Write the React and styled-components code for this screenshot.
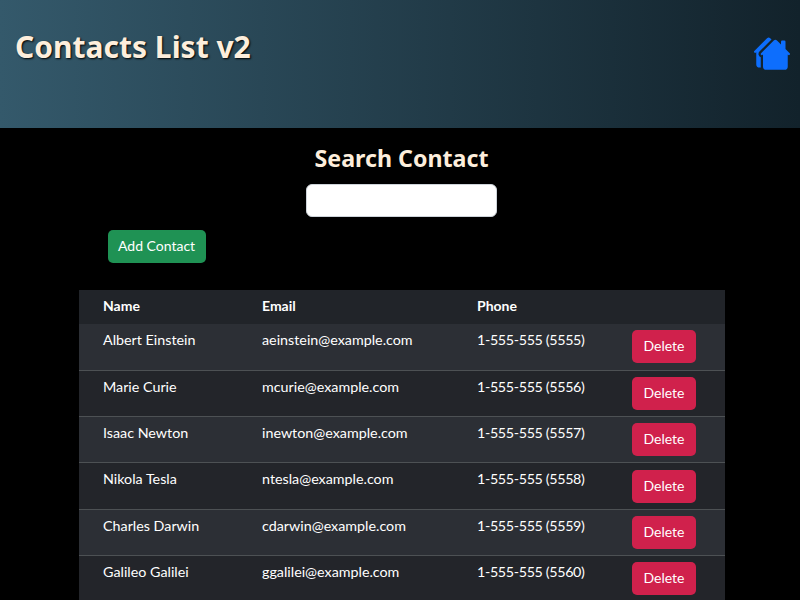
import React from "react";
import styled, { createGlobalStyle } from "styled-components";
import { BsHousesFill } from "react-icons/bs";

const GlobalStyle = createGlobalStyle`
  html, body {
    margin: 0;
    height: 100%;
    overflow: hidden;
    background: #000;
    font-family: "Lato", "Noto Sans", sans-serif;
  }
`;

const Header = styled.header`
  height: 128px;
  display: flex;
  align-items: center;
  justify-content: space-between;
  padding: 0 10px 0 15px;
  box-sizing: border-box;
  background: linear-gradient(90deg, #34596b 0%, #12222b 100%);
`;

const Title = styled.h1`
  margin: 0 0 34px;
  font-family: "Noto Sans", sans-serif;
  font-size: 30px;
  line-height: 36px;
  font-weight: 700;
  color: #fdeedc;
  text-shadow: 1px 1px 2px #000;
`;

const HomeLink = styled.a`
  display: flex;
  color: #0d6efd;
  margin-bottom: 20px;
`;

const Main = styled.main`
  display: flex;
  flex-direction: column;
  align-items: center;
  padding-left: 3px;
`;

const SearchTitle = styled.h2`
  margin: 15px 0 11px;
  font-family: "Noto Sans", sans-serif;
  font-size: 23.2px;
  line-height: 30px;
  font-weight: 700;
  color: #fdeedc;
`;

const SearchInput = styled.input`
  width: 191px;
  height: 33px;
  box-sizing: border-box;
  border: 1px solid #ced4da;
  border-radius: 6px;
  background: #fff;
`;

const Toolbar = styled.div`
  width: 646px;
  margin-top: 13px;
  padding-left: 29px;
  box-sizing: border-box;
`;

const Button = styled.button`
  height: 33px;
  padding: 0 ${(p) => p.$pad}px 2px;
  border: none;
  border-radius: 5px;
  background: ${(p) => p.$bg};
  color: #fff;
  font-family: inherit;
  font-size: 14px;
`;

const Table = styled.table`
  width: 646px;
  margin: 27px 0 0 1px;
  border-collapse: collapse;
  table-layout: fixed;
  color: #fff;
  font-size: 14.3px;
`;

const HeadRow = styled.tr`
  height: 34px;
  background: #212429;
`;

const Th = styled.th`
  box-sizing: border-box;
  padding: 0 0 3px ${(p) => p.$left || 0}px;
  text-align: left;
  font-size: 14px;
  font-weight: 700;
  width: ${(p) => p.$w}px;
`;

const Row = styled.tr`
  height: 46.33px;
  background: ${(p) => (p.$odd ? "#2c2f35" : "#23252a")};
  border-bottom: 1px solid #4d5154;
`;

const Td = styled.td`
  padding: 6px 0 0 ${(p) => p.$left || 0}px;
  vertical-align: top;
  line-height: 20px;
  letter-spacing: ${(p) => (p.$tight ? "-0.35px" : "0")};
`;

const ActionCell = styled.td`
  padding: 0;
  vertical-align: middle;
`;

const contacts = [
  ["Albert Einstein", "aeinstein@example.com", "1-555-555 (5555)"],
  ["Marie Curie", "mcurie@example.com", "1-555-555 (5556)"],
  ["Isaac Newton", "inewton@example.com", "1-555-555 (5557)"],
  ["Nikola Tesla", "ntesla@example.com", "1-555-555 (5558)"],
  ["Charles Darwin", "cdarwin@example.com", "1-555-555 (5559)"],
  ["Galileo Galilei", "ggalilei@example.com", "1-555-555 (5560)"],
];

export default function App() {
  return (
    <>
      <GlobalStyle />
      <Header>
        <Title>Contacts List v2</Title>
        <HomeLink href="#">
          <BsHousesFill size={36} />
        </HomeLink>
      </Header>
      <Main>
        <SearchTitle>Search Contact</SearchTitle>
        <SearchInput type="text" />
        <Toolbar>
          <Button $bg="#1f9254" $pad={10.5}>Add Contact</Button>
        </Toolbar>
        <Table>
          <thead>
            <HeadRow>
              <Th $w={183} $left={24}>Name</Th>
              <Th $w={215}>Email</Th>
              <Th $w={155}>Phone</Th>
              <Th $w={93} />
            </HeadRow>
          </thead>
          <tbody>
            {contacts.map((c, i) => (
              <Row key={c[1]} $odd={i % 2 === 0}>
                <Td $left={24}>{c[0]}</Td>
                <Td>{c[1]}</Td>
                <Td $tight>{c[2]}</Td>
                <ActionCell>
                  <Button $bg="#d0214c" $pad={11.5}>Delete</Button>
                </ActionCell>
              </Row>
            ))}
          </tbody>
        </Table>
      </Main>
    </>
  );
}
